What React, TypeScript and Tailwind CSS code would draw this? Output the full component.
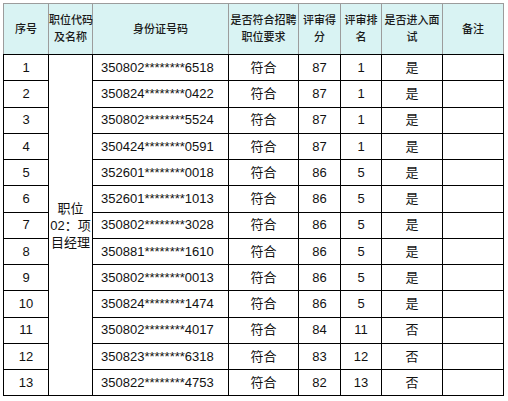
const rows = [
  { no: 1, id: "350802********6518", score: 87, rank: 1, pass: "是" },
  { no: 2, id: "350824********0422", score: 87, rank: 1, pass: "是" },
  { no: 3, id: "350802********5524", score: 87, rank: 1, pass: "是" },
  { no: 4, id: "350424********0591", score: 87, rank: 1, pass: "是" },
  { no: 5, id: "352601********0018", score: 86, rank: 5, pass: "是" },
  { no: 6, id: "352601********1013", score: 86, rank: 5, pass: "是" },
  { no: 7, id: "350802********3028", score: 86, rank: 5, pass: "是" },
  { no: 8, id: "350881********1610", score: 86, rank: 5, pass: "是" },
  { no: 9, id: "350802********0013", score: 86, rank: 5, pass: "是" },
  { no: 10, id: "350824********1474", score: 86, rank: 5, pass: "是" },
  { no: 11, id: "350802********4017", score: 84, rank: 11, pass: "否" },
  { no: 12, id: "350823********6318", score: 83, rank: 12, pass: "否" },
  { no: 13, id: "350822********4753", score: 82, rank: 13, pass: "否" },
];

const th =
  "border border-[#9c9c9c] border-b-black bg-[#d9f3f3] p-0 text-center align-middle whitespace-nowrap text-[11px] font-medium leading-[17px] text-[#1a1a1a]";
const td = "border border-black p-0 text-center align-middle text-[13px] text-[#111]";

export default function App() {
  return (
    <div
      className="min-h-[401px] w-[508px] bg-white pl-[3px] pt-[3px]"
      style={{ fontFamily: '"Liberation Sans", "Noto Sans CJK SC", sans-serif' }}
    >
      <table className="w-[500px] table-fixed border-collapse">
        <colgroup>
          <col className="w-[45px]" />
          <col className="w-[44px]" />
          <col className="w-[136px]" />
          <col className="w-[70px]" />
          <col className="w-[42px]" />
          <col className="w-[41px]" />
          <col className="w-[61px]" />
          <col className="w-[61px]" />
        </colgroup>
        <thead>
          <tr className="h-[51px]">
            <th className={th}>序号</th>
            <th className={th}>
              职位代码
              <br />
              及名称
            </th>
            <th className={th}>身份证号码</th>
            <th className={th}>
              是否符合招聘
              <br />
              职位要求
            </th>
            <th className={th}>
              评审得
              <br />
              分
            </th>
            <th className={th}>
              评审排
              <br />
              名
            </th>
            <th className={th}>
              是否进入面
              <br />
              试
            </th>
            <th className={th}>备注</th>
          </tr>
        </thead>
        <tbody>
          {rows.map((row, index) => (
            <tr key={row.no} className="h-[26.25px]">
              <td className={td}>{row.no}</td>
              {index === 0 ? (
                <td
                  rowSpan={13}
                  className={`${td} whitespace-nowrap text-[13px] leading-[17px]`}
                >
                  职位
                  <br />
                  02：项
                  <br />
                  目经理
                </td>
              ) : null}
              <td className={`${td} text-left`}>
                <span className="pl-[8px]">{row.id}</span>
              </td>
              <td className={td}>符合</td>
              <td className={td}>{row.score}</td>
              <td className={td}>{row.rank}</td>
              <td className={td}>{row.pass}</td>
              <td className={td}></td>
            </tr>
          ))}
        </tbody>
      </table>
    </div>
  );
}
